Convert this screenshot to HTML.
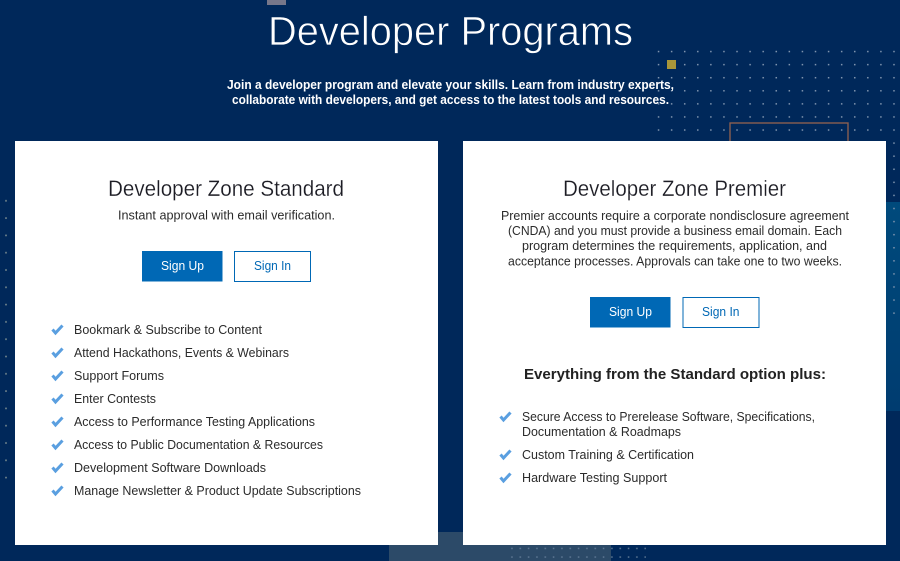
<!DOCTYPE html>
<html><head><meta charset="utf-8"><title>Developer Programs</title>
<style>
html,body{margin:0;padding:0;width:900px;height:561px;overflow:hidden;background:#00285a}
svg{display:block}
text{font-family:"Liberation Sans",sans-serif}
.l{font-size:13px;fill:#2b2b2b}
.b{font-size:13px}
</style></head><body>
<svg width="900" height="561" viewBox="0 0 900 561" xmlns="http://www.w3.org/2000/svg">
<defs>
<pattern id="d1" x="652" y="45" width="13.08" height="13.08" patternUnits="userSpaceOnUse"><rect x="5.8" y="5.8" width="1.5" height="1.5" fill="#8094ae"/></pattern>
<pattern id="d2" x="0" y="195.8" width="12" height="17.3" patternUnits="userSpaceOnUse"><rect x="5.200" y="4.200" width="1.600" height="1.600" fill="#7a8c90"/></pattern>
<pattern id="d3" x="508" y="544.5" width="8.33" height="8.6" patternUnits="userSpaceOnUse"><rect x="3.200" y="3.200" width="1.500" height="1.500" fill="#5f7894"/></pattern>
<linearGradient id="g" x1="0" y1="0" x2="0" y2="1"><stop offset="0" stop-color="#004a7c"/><stop offset="1" stop-color="#003c70"/></linearGradient>
</defs>
<rect width="900" height="561" fill="#00285a"/>
<rect x="886" y="202" width="14" height="209" fill="url(#g)"/>
<rect x="389" y="532" width="222" height="29" fill="#2c4a68"/>
<rect x="508" y="544.5" width="138" height="17" fill="url(#d3)"/>
<rect x="652" y="45" width="248" height="91" fill="url(#d1)"/>
<rect x="885" y="136" width="15" height="182" fill="url(#d1)"/>
<rect x="0" y="195.8" width="12" height="285" fill="url(#d2)"/>
<rect x="267" y="0" width="19" height="5" fill="#77778a"/>
<rect x="667" y="60" width="9" height="9" fill="#a8963a"/>
<rect x="730" y="123" width="118" height="30" fill="none" stroke="#8a5f50" stroke-width="1.4"/>

<text x="268" y="45" font-size="41" fill="#fff" stroke="#00285a" stroke-width="0.7" textLength="365" lengthAdjust="spacingAndGlyphs">Developer Programs</text>
<text x="227" y="89" font-size="13" font-weight="700" fill="#fff" textLength="447" lengthAdjust="spacingAndGlyphs">Join a developer program and elevate your skills. Learn from industry experts,</text>
<text x="232" y="104" font-size="13" font-weight="700" fill="#fff" textLength="437" lengthAdjust="spacingAndGlyphs">collaborate with developers, and get access to the latest tools and resources.</text>

<rect x="15" y="141" width="423" height="404" fill="#fff"/>
<rect x="463" y="141" width="423" height="404" fill="#fff"/>

<text x="108" y="196" font-size="22" fill="#1c1c24" stroke="#fff" stroke-width="0.2" textLength="236" lengthAdjust="spacingAndGlyphs">Developer Zone Standard</text>
<text x="118" y="219.5" class="l" textLength="217" lengthAdjust="spacingAndGlyphs">Instant approval with email verification.</text>
<rect x="142" y="251" width="80.500" height="30.500" fill="#0068b5"/>
<text x="161" y="270" class="b" fill="#fff" textLength="43" lengthAdjust="spacingAndGlyphs">Sign Up</text>
<rect x="234.500" y="251.500" width="76" height="30" fill="#fff" stroke="#0068b5"/>
<text x="254" y="270" class="b" fill="#0068b5" textLength="37" lengthAdjust="spacingAndGlyphs">Sign In</text>

<text x="74" y="334" class="l" textLength="188" lengthAdjust="spacingAndGlyphs">Bookmark &amp; Subscribe to Content</text>
<text x="74" y="357" class="l" textLength="215" lengthAdjust="spacingAndGlyphs">Attend Hackathons, Events &amp; Webinars</text>
<text x="74" y="380" class="l" textLength="90" lengthAdjust="spacingAndGlyphs">Support Forums</text>
<text x="74" y="403" class="l" textLength="82" lengthAdjust="spacingAndGlyphs">Enter Contests</text>
<text x="74" y="426" class="l" textLength="241" lengthAdjust="spacingAndGlyphs">Access to Performance Testing Applications</text>
<text x="74" y="449" class="l" textLength="249" lengthAdjust="spacingAndGlyphs">Access to Public Documentation &amp; Resources</text>
<text x="74" y="472" class="l" textLength="192" lengthAdjust="spacingAndGlyphs">Development Software Downloads</text>
<text x="74" y="495" class="l" textLength="287" lengthAdjust="spacingAndGlyphs">Manage Newsletter &amp; Product Update Subscriptions</text>
<g fill="none" stroke="#5a9fe0" stroke-width="3">
<path d="M52.500 329.500l3 3.500 7-7.500"/>
<path d="M52.500 352.500l3 3.500 7-7.500"/>
<path d="M52.500 375.500l3 3.500 7-7.500"/>
<path d="M52.500 398.500l3 3.500 7-7.500"/>
<path d="M52.500 421.500l3 3.500 7-7.500"/>
<path d="M52.500 444.500l3 3.500 7-7.500"/>
<path d="M52.500 467.500l3 3.500 7-7.500"/>
<path d="M52.500 490.500l3 3.500 7-7.500"/>
<path d="M500.500 416.500l3 3.500 7-7.500"/>
<path d="M500.500 454.500l3 3.500 7-7.500"/>
<path d="M500.500 477.500l3 3.500 7-7.500"/>
</g>

<text x="563" y="196" font-size="22" fill="#1c1c24" stroke="#fff" stroke-width="0.2" textLength="223" lengthAdjust="spacingAndGlyphs">Developer Zone Premier</text>
<text x="501" y="220" class="l" textLength="348" lengthAdjust="spacingAndGlyphs">Premier accounts require a corporate nondisclosure agreement</text>
<text x="508" y="235" class="l" textLength="334" lengthAdjust="spacingAndGlyphs">(CNDA) and you must provide a business email domain. Each</text>
<text x="522" y="250" class="l" textLength="305" lengthAdjust="spacingAndGlyphs">program determines the requirements, application, and</text>
<text x="508" y="265.500" class="l" textLength="334" lengthAdjust="spacingAndGlyphs">acceptance processes. Approvals can take one to two weeks.</text>
<rect x="590" y="297" width="80.500" height="30.500" fill="#0068b5"/>
<text x="609" y="316" class="b" fill="#fff" textLength="43" lengthAdjust="spacingAndGlyphs">Sign Up</text>
<rect x="683" y="297.500" width="76" height="30" fill="#fff" stroke="#0068b5"/>
<text x="702" y="316" class="b" fill="#0068b5" textLength="37.500" lengthAdjust="spacingAndGlyphs">Sign In</text>
<text x="524" y="379" font-size="15" font-weight="700" fill="#222" textLength="302" lengthAdjust="spacingAndGlyphs">Everything from the Standard option plus:</text>
<text x="522" y="421" class="l" textLength="293" lengthAdjust="spacingAndGlyphs">Secure Access to Prerelease Software, Specifications,</text>
<text x="522" y="436" class="l" textLength="159" lengthAdjust="spacingAndGlyphs">Documentation &amp; Roadmaps</text>
<text x="522" y="459" class="l" textLength="172" lengthAdjust="spacingAndGlyphs">Custom Training &amp; Certification</text>
<text x="522" y="482" class="l" textLength="145" lengthAdjust="spacingAndGlyphs">Hardware Testing Support</text>
</svg>
</body></html>
